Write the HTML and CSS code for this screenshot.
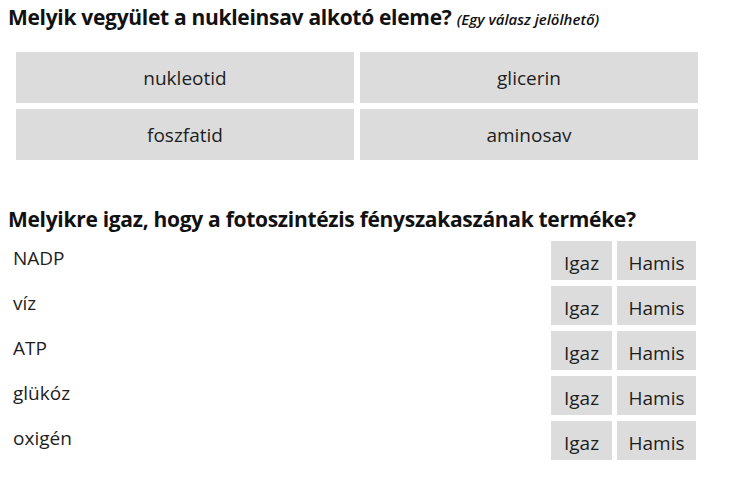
FILE: index.html
```html
<!DOCTYPE html>
<html lang="hu">
<head>
  <meta charset="UTF-8" />
  <meta name="viewport" content="width=device-width, initial-scale=1.0"/>
  <title>Kvíz</title>
  <link rel="stylesheet" href="styles.css">
</head>
<body>
  <div class="question">
    <h3>Melyik vegyület a nukleinsav alkotó eleme? <small>(Egy válasz jelölhető)</small></h3>
    <div class="choices">
      <button class="choice">nukleotid</button>
      <button class="choice">glicerin</button>
      <button class="choice">foszfatid</button>
      <button class="choice">aminosav</button>
    </div>
  </div>

  <div class="question">
    <h3>Melyikre igaz, hogy a fotoszintézis fényszakaszának terméke?</h3>
    <div class="statements">
      <div class="statement">
        <span class="label">NADP</span>
        <button class="tf yes">Igaz</button>
        <button class="tf no">Hamis</button>
      </div>
      <div class="statement">
        <span class="label">víz</span>
        <button class="tf yes">Igaz</button>
        <button class="tf no">Hamis</button>
      </div>
      <div class="statement">
        <span class="label">ATP</span>
        <button class="tf yes">Igaz</button>
        <button class="tf no">Hamis</button>
      </div>
      <div class="statement">
        <span class="label">glükóz</span>
        <button class="tf yes">Igaz</button>
        <button class="tf no">Hamis</button>
      </div>
      <div class="statement">
        <span class="label">oxigén</span>
        <button class="tf yes">Igaz</button>
        <button class="tf no">Hamis</button>
      </div>
    </div>
  </div>
</body>
</html>
```

FILE: styles.css
```css
body {
  font-family: "Open Sans", "Noto Sans", sans-serif;
  font-size: 19px;
  color: #1e1e1e;
  margin: 5px 8px 8px;
  background: #fff;
}
.question {
  width: 690px;
  margin-bottom: 47px;
}
h3 {
  font-size: 21px;
  font-weight: bold;
  letter-spacing: -0.3px;
  color: #111;
  margin: 0 0 10px;
  line-height: 24px;
}
h3 small {
  font-size: 15px;
  font-style: italic;
  font-weight: 600;
  letter-spacing: 0;
}
.choices {
  display: grid;
  grid-template-columns: 1fr 1fr;
  gap: 6px;
  margin-top: 21px;
  padding-left: 8px;
}
button {
  font-family: inherit;
  font-size: 19px;
  color: #1e1e1e;
  background: #dcdcdc;
  border: none;
  cursor: pointer;
}
.choice {
  height: 51px;
  padding-top: 2px;
}
.statements {
  width: 688px;
}
.statement {
  display: flex;
  align-items: center;
  gap: 5px;
  margin-bottom: 6px;
}
.label {
  flex: 1;
  padding-left: 5px;
  margin-bottom: 5px;
}
.tf {
  height: 39px;
  padding: 4px 0 0;
  flex: none;
}
.yes {
  width: 61px;
}
.no {
  width: 79px;
}
```
